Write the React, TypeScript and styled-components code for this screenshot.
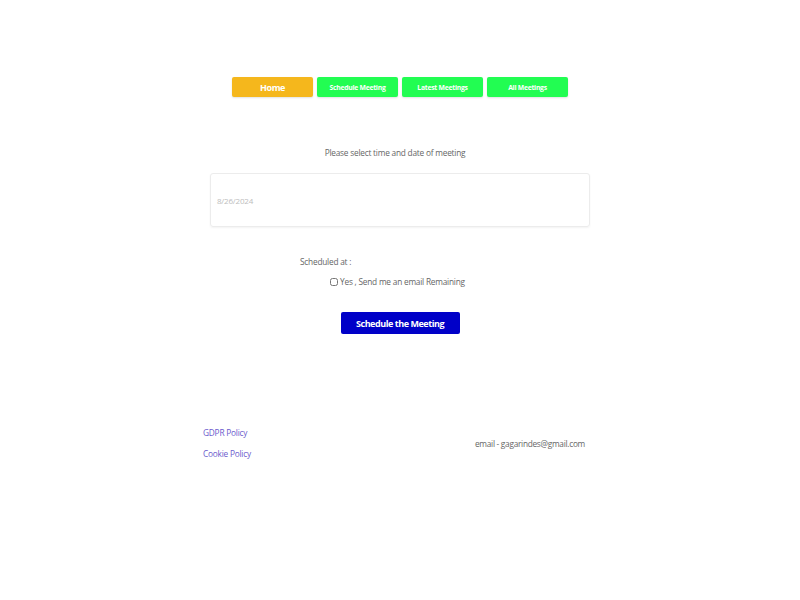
import styled, { createGlobalStyle } from 'styled-components';

const GlobalStyle = createGlobalStyle`
  body {
    margin: 0;
    background: #ffffff;
    font-family: 'Open Sans', 'Noto Sans', sans-serif;
  }
`;

const tabs = ['Schedule Meeting', 'Latest Meetings', 'All Meetings'];

export default function App() {
  return (
    <Page>
      <GlobalStyle />
      <Nav>
        <NavButton $home>Home</NavButton>
        {tabs.map((t) => (
          <NavButton key={t}>{t}</NavButton>
        ))}
      </Nav>
      <Main>
        <Prompt>Please select time and date of meeting</Prompt>
        <DateBox>
          <DateText>8/26/2024</DateText>
        </DateBox>
        <ScheduledAt>Scheduled at :</ScheduledAt>
        <CheckRow>
          <Check type="checkbox" />
          <span>Yes , Send me an email Remaining</span>
        </CheckRow>
        <SubmitButton>Schedule the Meeting</SubmitButton>
      </Main>
      <Footer>
        <Links>
          <FooterLink>GDPR Policy</FooterLink>
          <FooterLink>Cookie Policy</FooterLink>
        </Links>
        <Email>email - gagarindes@gmail.com</Email>
      </Footer>
    </Page>
  );
}

const Page = styled.div`
  width: 800px;
  height: 600px;
  display: flex;
  flex-direction: column;
  align-items: center;
  color: #666;
`;

const Nav = styled.nav`
  display: flex;
  gap: 4px;
  margin-top: 77px;
`;

const NavButton = styled.button<{ $home?: boolean }>`
  width: 81px;
  height: 20px;
  border: none;
  border-radius: 2px;
  padding: 0;
  background: ${(p) => (p.$home ? '#f5b71c' : '#22fd52')};
  color: #fff;
  font-family: 'Open Sans', sans-serif;
  font-weight: 700;
  font-size: ${(p) => (p.$home ? '9px' : '6.8px')};
  letter-spacing: ${(p) => (p.$home ? '-0.4px' : '-0.26px')};
  box-shadow: 0 1px 2px rgba(0, 0, 0, 0.12);
`;

const Main = styled.section`
  width: 380px;
  display: flex;
  flex-direction: column;
  align-items: center;
  margin-top: 50px;
`;

const BodyText = `
  font-size: 8.3px;
  line-height: 12px;
  letter-spacing: -0.22px;
  color: #666;
`;

const Prompt = styled.p`
  ${BodyText}
  margin: 0 0 0 -10px;
`;

const DateBox = styled.div`
  box-sizing: border-box;
  width: 380px;
  height: 54px;
  margin-top: 14px;
  border: 1px solid #ececec;
  border-radius: 3px;
  box-shadow: 0 1px 2px rgba(0, 0, 0, 0.05);
  display: flex;
  align-items: center;
  padding-left: 6px;
`;

const DateText = styled.span`
  font-size: 8px;
  letter-spacing: -0.2px;
  color: #bdbdbd;
`;

const ScheduledAt = styled.div`
  ${BodyText}
  align-self: flex-start;
  margin: 29px 0 0 90px;
`;

const CheckRow = styled.label`
  ${BodyText}
  display: flex;
  align-items: center;
  gap: 2px;
  margin: 8px 0 0 -5px;
`;

const Check = styled.input`
  width: 8px;
  height: 8px;
  margin: 0;
`;

const SubmitButton = styled.button`
  width: 119px;
  height: 22px;
  margin-top: 24px;
  border: none;
  border-radius: 2px;
  background: #0000c8;
  color: #fff;
  font-family: 'Open Sans', sans-serif;
  font-weight: 700;
  font-size: 9px;
  letter-spacing: -0.45px;
`;

const Footer = styled.footer`
  width: 382px;
  display: flex;
  justify-content: space-between;
  align-items: center;
  margin: 93px 12px 0 0;
`;

const Links = styled.div`
  display: flex;
  flex-direction: column;
  gap: 9px;
`;

const FooterLink = styled.a`
  ${BodyText}
  color: #6a5acd;
`;

const Email = styled.div`
  ${BodyText}
  letter-spacing: -0.28px;
`;
